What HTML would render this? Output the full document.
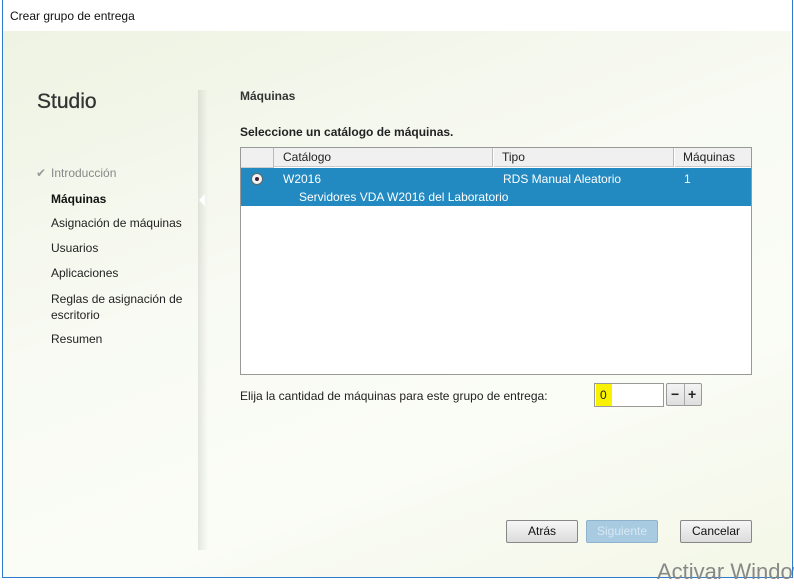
<!DOCTYPE html><html><head><style>
body{margin:0;width:794px;height:579px;overflow:hidden;background:#fff;font-family:"Liberation Sans",sans-serif;font-size:12px;color:#222;position:relative}
.win{position:absolute;left:2px;top:0;width:789px;height:577px;border:1px solid #2b7bd0;border-top:none;background:#fff}
.title{position:absolute;left:10px;top:9px;font-size:12px;color:#111}
.cont{position:absolute;left:3px;top:31px;width:788px;height:546px;background:linear-gradient(160deg,#eef3e2 0%,#f8faf3 40%,#fafcf6 70%,#f3f7e6 100%)}
.side{position:absolute;left:198px;top:90px;width:10px;height:460px;background:linear-gradient(90deg,rgba(0,0,0,0.09),rgba(255,255,255,0))}
.abs{position:absolute}
.nav{position:absolute;left:51px;font-size:12px;color:#222}
.tbl{position:absolute;left:240px;top:147px;width:510px;height:226px;border:1px solid #999;background:#fff}
.hd{position:absolute;top:0;height:19px;background:#f0f0f0;border-right:1px solid #bbb;border-bottom:1px solid #ccc;line-height:19px;font-size:12px;color:#222}
.sel{position:absolute;left:0;top:20px;width:510px;height:38px;background:#2289c1;color:#fff}
.btn{position:absolute;top:520px;height:21px;border:1px solid #888;border-radius:2px;background:linear-gradient(#f6f6f6,#dcdcdc);text-align:center;line-height:21px;font-size:12px;color:#111}
</style></head><body>
<div class="win"></div>
<div class="title">Crear grupo de entrega</div>
<div class="cont"></div>
<div class="side"></div>
<div class="abs" style="left:37px;top:90px;font-size:21px;color:#333;-webkit-text-stroke:0.3px #333">Studio</div>
<div class="nav" style="top:166px;color:#888"><span style="position:absolute;left:-15px;color:#999">✔</span>Introducción</div>
<div class="nav" style="top:192px;font-weight:bold;color:#111">Máquinas</div>
<div class="abs" style="left:199px;top:194px;width:0;height:0;border-top:6px solid transparent;border-bottom:6px solid transparent;border-right:6px solid #fff"></div>
<div class="nav" style="top:216px">Asignación de máquinas</div>
<div class="nav" style="top:241px">Usuarios</div>
<div class="nav" style="top:266px">Aplicaciones</div>
<div class="nav" style="top:291px;line-height:16px">Reglas de asignación de<br>escritorio</div>
<div class="nav" style="top:332px">Resumen</div>
<div class="abs" style="left:240px;top:89px;font-weight:bold;color:#333">Máquinas</div>
<div class="abs" style="left:240px;top:125px;font-weight:bold;color:#222">Seleccione un catálogo de máquinas.</div>
<div class="tbl">
<div class="hd" style="left:0;width:32px"></div>
<div class="hd" style="left:33px;width:219px;padding-left:9px;box-sizing:border-box">Catálogo</div>
<div class="hd" style="left:253px;width:180px;padding-left:8px;box-sizing:border-box">Tipo</div>
<div class="hd" style="left:434px;width:76px;padding-left:8px;box-sizing:border-box;border-right:none">Máquinas</div>
<div class="sel">
<div class="abs" style="left:10px;top:5px;width:10px;height:10px;border-radius:50%;background:#f4f4f4;border:1px solid #666"><div style="margin:3px;width:4px;height:4px;border-radius:50%;background:#402030"></div></div>
<div class="abs" style="left:42px;top:4px">W2016</div>
<div class="abs" style="left:262px;top:4px">RDS Manual Aleatorio</div>
<div class="abs" style="left:443px;top:4px">1</div>
<div class="abs" style="left:58px;top:22px">Servidores VDA W2016 del Laboratorio</div>
</div></div>
<div class="abs" style="left:240px;top:389px">Elija la cantidad de máquinas para este grupo de entrega:</div>
<div class="abs" style="left:594px;top:383px;width:68px;height:22px;border:1px solid #999;background:#fff"><div style="position:absolute;left:1px;top:0;width:16px;height:22px;background:#f8f200"></div><div style="position:absolute;left:5px;top:4px">0</div></div>
<div class="abs" style="left:666px;top:383px;width:34px;height:21px;border:1px solid #999;border-radius:2px;background:linear-gradient(#f4f4f4,#dedede);font-weight:bold;font-size:14px;line-height:20px"><span style="position:absolute;left:4px">−</span><span style="position:absolute;left:17px;top:0;height:21px;border-left:1px solid #aaa"></span><span style="position:absolute;left:21px">+</span></div>
<div class="btn" style="left:506px;width:70px">Atrás</div>
<div class="btn" style="left:586px;width:70px;background:#a8cbe2;border-color:#8fb3cc;color:#d8e8f2">Siguiente</div>
<div class="btn" style="left:680px;width:70px">Cancelar</div>
<div class="abs" style="left:657px;top:559px;font-size:22px;color:#888;white-space:nowrap">Activar Windows</div>
</body></html>
